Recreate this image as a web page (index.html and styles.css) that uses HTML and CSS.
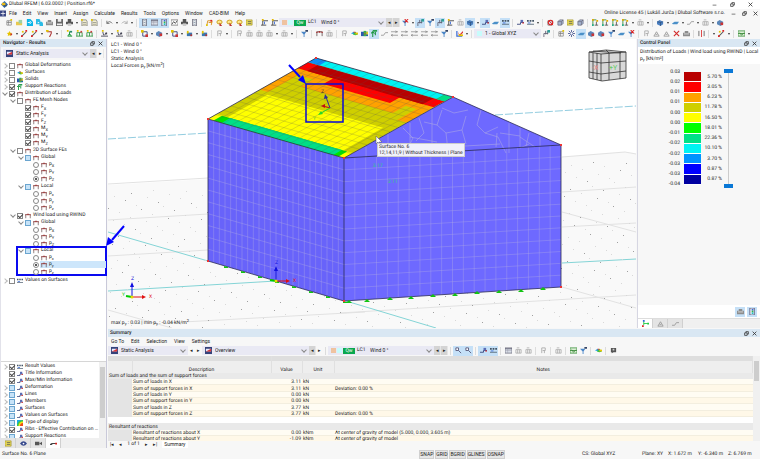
FILE: index.html
```
<!DOCTYPE html>
<html lang="en">
<head>
    <meta charset="UTF-8">
    <meta name="viewport" content="width=device-width, initial-scale=1.0">
    <title>Dlubal RFEM | 6.03.0002 | Position.rf6*</title>
    <link rel="stylesheet" href="styles.css">
</head>
<body>

<svg class="sprite" aria-hidden="true">
    <symbol id="new" viewBox="0 0 8 8"><path d="M1 2h5v5H1zM1 4h5M3 2v5" fill="#fff" stroke="#777" stroke-width=".8"/><path d="M5 0h2v2H5z" fill="#e2c400"/></symbol>
    <symbol id="open" viewBox="0 0 8 8"><path d="M0 3h3l1 1h3v3H0z" fill="#e9c94f"/><path d="M3 1h4v4H3z" fill="#9ed0a6"/></symbol>
    <symbol id="cloud" viewBox="0 0 8 8"><path d="M1 0h4l3 3v5H1z" fill="#08b4e8"/><path d="M2 4h3M4 2l2 2-2 2" stroke="#fff" fill="none"/></symbol>
    <symbol id="clouds" viewBox="0 0 8 8"><path d="M0 0h4l1 2v4H0zM4 3h3l1 2v3H4z" fill="#2bbbe6"/><path d="M2 3l2 1-2 1" fill="#fff"/></symbol>
    <symbol id="box" viewBox="0 0 8 8"><path d="M0 3h8v4H0zM2 1h4v2H2z" fill="#8d8d8d"/><path d="M1 4h6v1H1z" fill="#ddd"/></symbol>
    <symbol id="save" viewBox="0 0 8 8"><path d="M0 0h8v8H0z" fill="#666"/><path d="M2 0h4v3H2zM1 5h6v2H1z" fill="#eee"/></symbol>
    <symbol id="print" viewBox="0 0 8 8"><path d="M0 3h8v3H0zM2 0h4v3H2z" fill="#555"/><path d="M2 5h4v3H2z" fill="#ccc"/></symbol>
    <symbol id="page" viewBox="0 0 8 8"><path d="M1 1h5l1 2v5H1z" fill="#f3efcf" stroke="#777" stroke-width=".8"/><path d="M2 4h4M2 6h4" stroke="#777" stroke-width=".7"/><path d="M0 0h2v2H0z" fill="#e2c400"/></symbol>
    <symbol id="undo" viewBox="0 0 8 8"><path d="M1 2v3h3M1 5q3-4 6 0" fill="none" stroke="#666"/></symbol>
    <symbol id="redo" viewBox="0 0 8 8"><path d="M7 2v3H4M7 5q-3-4-6 0" fill="none" stroke="#aaa"/></symbol>
    <symbol id="panel" viewBox="0 0 8 8"><path d="M2 0h4v8H2z" fill="#fff" stroke="#556"/><path d="M3 2h2M3 4h2M3 6h2" stroke="#89a"/></symbol>
    <symbol id="table" viewBox="0 0 8 8"><path d="M0 1h8v6H0z" fill="#d8dde6" stroke="#667" stroke-width=".8"/><path d="M0 2h8" stroke="#667"/><path d="M0 4h8M3 2v5" stroke="#99a" stroke-width=".5"/></symbol>
    <symbol id="scale" viewBox="0 0 8 8"><path d="M1 0h5v8H1z" fill="#fff" stroke="#557"/><path d="M3 1h2v2H3z" fill="#3a6cd8"/><path d="M3 3h2v2H3z" fill="#35b54a"/><path d="M3 5h2v2H3z" fill="#2bc"/></symbol>
    <symbol id="chart" viewBox="0 0 8 8"><path d="M0 1h8v6H0z" fill="#fff" stroke="#666" stroke-width=".8"/><path d="M1 6l2-3 2 2 2-3" stroke="#444" fill="none"/></symbol>
    <symbol id="frame" viewBox="0 0 8 8"><path d="M1 7l1-5h5l-1 5M3 4h4" fill="none" stroke="#d98a16"/><path d="M5 1h2v2H5z" fill="#d22"/><path d="M0 6h2v2H0z" fill="#e2c400"/></symbol>
    <symbol id="loop" viewBox="0 0 8 8"><ellipse cx="4" cy="3.5" rx="3" ry="2.2" fill="#ffe98a" stroke="#c79a10"/><path d="M4 4l3 4H4z" fill="#b33"/></symbol>
    <symbol id="find" viewBox="0 0 8 8"><path d="M1 1h3v3H1z" fill="#fff" stroke="#557"/><path d="M4 4l3 3" stroke="#557"/></symbol>
    <symbol id="note" viewBox="0 0 8 8"><path d="M0 1h7v6H0z" fill="#efe05a" stroke="#998a22" stroke-width=".7"/><path d="M2 3h4M2 5h4" stroke="#665" /></symbol>
    <symbol id="case" viewBox="0 0 8 8"><path d="M2 7V2h6M0 7h6" fill="none" stroke="#444"/><path d="M1 0h2v2H1z" fill="#e2b400"/><path d="M4 3v3" stroke="#3a6cd8"/></symbol>
    <symbol id="funnel" viewBox="0 0 8 8"><path d="M0 2h6L4 5v3H3V5z" fill="#4a86c8"/><path d="M5 0h3v2H5z" fill="#346"/></symbol>
    <symbol id="cut" viewBox="0 0 8 8"><path d="M0 2h6L4 5v3H3V5z" fill="#4a86c8"/><path d="M3 0l4 4M7 0L3 4" stroke="#d22" stroke-width="1.2"/></symbol>
    <symbol id="load" viewBox="0 0 8 8"><path d="M1 8V4h5M3 1v4M5 1v4" fill="none" stroke="#667"/><path d="M5 0h3v3H5z" fill="#2f9f9a"/></symbol>
    <symbol id="value" viewBox="0 0 8 8"><path d="M0 6h4V4h4" fill="none" stroke="#35427a"/><path d="M4 1h3v3H4z" fill="#5a6cb4"/><path d="M6 4h2v1H6z" fill="#d22"/></symbol>
    <symbol id="number" viewBox="0 0 8 8"><path d="M0 1h2v2H0zM3 1h2v2H3zM6 1h2v2H6z" fill="#456"/><path d="M0 6h8" stroke="#567" /><path d="M1 4h3v1H1z" fill="#3a6cd8"/></symbol>
    <symbol id="cube" viewBox="0 0 8 8"><path d="M1 3l2-2h4v4L5 7H1z" fill="#a8b8d6" stroke="#667" stroke-width=".8"/><path d="M1 3h4v4M5 3l2-2" fill="none" stroke="#667" stroke-width=".8"/></symbol>
    <symbol id="nocube" viewBox="0 0 8 8"><path d="M1 2h5v5H1z" fill="#dde" stroke="#888"/><circle cx="4" cy="4" r="2.6" fill="none" stroke="#d22" stroke-width="1.3"/><path d="M2 2l5 5" stroke="#d22"/></symbol>
    <symbol id="axis" viewBox="0 0 8 8"><path d="M1 1v6M1 1h4" stroke="#3a8c3a" fill="none"/><path d="M5 3v4M3 7h4" stroke="#555"/><path d="M0 0h2v2H0zM5 1h2v2H5z" fill="#e2a800"/><path d="M0 6h2v2H0z" fill="#2a8"/></symbol>
    <symbol id="tripod" viewBox="0 0 8 8"><path d="M2 1v5M2 4h5" stroke="#2c4" fill="none"/><path d="M1 0h2v2H1z" fill="#36d"/><path d="M6 3h2v2H6z" fill="#2c4"/><path d="M0 6h2v2H0z" fill="#d22"/></symbol>
    <symbol id="solid" viewBox="0 0 8 8"><path d="M0 3l3-2 4 2v3L4 8 0 6z" fill="#4a7fc1"/><path d="M0 3l4 1 3-1M4 4v4" stroke="#28466f" fill="none" stroke-width=".7"/></symbol>
    <symbol id="solidr" viewBox="0 0 8 8"><path d="M0 3l3-2 4 2v3L4 8 0 6z" fill="#5b87b9"/><path d="M4 4h3v3H4z" fill="#c33"/></symbol>
    <symbol id="flat" viewBox="0 0 8 8"><path d="M0 5l3-2h5L6 6H1z" fill="#4a8fc8"/></symbol>
    <symbol id="star" viewBox="0 0 8 8"><path d="M4 1l1 2 2 .3-1.500 1.500.4 2L4 6l-2 .8.400-2L1 3.300 3 3z" fill="#e6c200"/><path d="M5 4h2v2H5z" fill="#c33"/></symbol>
    <symbol id="line" viewBox="0 0 8 8"><path d="M1 7l5-5" stroke="#555" stroke-width="1.200"/><path d="M5 0h2v2H5zM0 6h2v2H0z" fill="#d22"/><path d="M1 1h2v2H1z" fill="#e2c400"/></symbol>
    <symbol id="pline" viewBox="0 0 8 8"><path d="M0 6h3l2-3h3" fill="none" stroke="#999"/></symbol>
    <symbol id="member" viewBox="0 0 8 8"><path d="M1 2h5v2L4 8" stroke="#a33" stroke-width="1.200" fill="none"/><path d="M0 0h3v2H0z" fill="#e2c400"/></symbol>
    <symbol id="support" viewBox="0 0 8 8"><path d="M4 2v4M2 7h5M4 4L2 7M4 4l2 3" stroke="#1d9a3a" stroke-width="1.100" fill="none"/><path d="M1 0h2v2H1z" fill="#e2c400"/><path d="M4 1h3v2H4z" fill="#2a8a6a"/></symbol>
    <symbol id="supports" viewBox="0 0 8 8"><path d="M1 3h6M1 3v4M4 3v4M7 3v4M0 7h8" stroke="#3a9a4a" fill="none"/><path d="M1 0h2v2H1z" fill="#e2c400"/><path d="M5 1h2v2H5z" fill="#c44"/></symbol>
    <symbol id="moment" viewBox="0 0 8 8"><path d="M0 7h8M3 6L2 2M4 6l2-3" stroke="#445" fill="none"/><path d="M1 0h2v2H1z" fill="#e2c400"/><path d="M5 3h2v2H5z" fill="#445"/></symbol>
    <symbol id="balance" viewBox="0 0 8 8"><path d="M1 7l3-5 3 5zM3 5h2" stroke="#999" fill="none"/></symbol>
    <symbol id="copy" viewBox="0 0 8 8"><path d="M2 2h5v5H2z" fill="none" stroke="#35427a"/><path d="M0 0h3v3H0z" fill="#e2c400"/><path d="M5 5h3v3H5z" fill="#c33"/></symbol>
    <symbol id="block" viewBox="0 0 8 8"><path d="M1 3h6v4H1z" fill="#3c78b0"/><path d="M1 1h2v3H1z" fill="#e2c400"/><path d="M5 5h2v2H5z" fill="#b33"/></symbol>
    <symbol id="grey" viewBox="0 0 8 8"><path d="M2 1v6M2 1h4v3H3M5 4v3" stroke="#aaa" fill="none"/></symbol>
    <symbol id="greys" viewBox="0 0 8 8"><path d="M1 3h6v4H1zM3 3v4M5 3v4M2 1h3" stroke="#aaa" fill="none" stroke-width=".9"/></symbol>
    <symbol id="steps" viewBox="0 0 8 8"><path d="M0 2h8M0 6h8M5 1l2 1-2 1M2 5L0 6l2 1" stroke="#909090" fill="none" stroke-width=".9"/></symbol>
    <symbol id="frc" viewBox="0 0 8 8"><path d="M1 7V2h6v5" fill="none" stroke="#6d5a5a"/><path d="M0 2h2v1H0zM3 1h2v2H3zM6 2h2v1H6z" fill="#a33"/></symbol>
    <symbol id="rainbow" viewBox="0 0 8 8"><path d="M0 4l3-2 2 1v2z" fill="#1ca0e6"/><path d="M2 5l3-3 3 3-3 1z" fill="#3fbf3f"/><path d="M3 2h2v1H3z" fill="#e22"/><path d="M5 3h3v2H5z" fill="#ebc400"/></symbol>
    <symbol id="rsolid" viewBox="0 0 8 8"><path d="M0 2h8v5H0z" fill="#2b59b3"/><path d="M3 1h3v6H3z" fill="#39b24b"/><path d="M6 2h2v3H6z" fill="#e0d020"/><path d="M4 3h1v2H4z" fill="#d43"/></symbol>
    <symbol id="react" viewBox="0 0 8 8"><path d="M2 8V2M5 2v4M0 4l2-2 2 2" fill="none" stroke="#1a9440" stroke-width="1.200"/><path d="M2 0h5v2H2z" fill="#2aa050"/></symbol>
    <symbol id="color" viewBox="0 0 8 8"><path d="M1 1v6h6" fill="none" stroke="#3a6cd8" stroke-width="1.400"/><path d="M2 2l2 3 4-4v2L4 7z" fill="#d33"/><path d="M3 5h5v2H3z" fill="#e5c300"/></symbol>
    <symbol id="gear" viewBox="0 0 8 8"><path d="M4 0v8M0 4h8M1 1l6 6M7 1L1 7" stroke="#4b5a94"/><circle cx="4" cy="4" r="1.300" fill="#fff"/></symbol>
    <symbol id="x" viewBox="0 0 8 8"><path d="M1 1l6 6M7 1L1 7" stroke="#d22b2b" stroke-width="1.300"/></symbol>
    <symbol id="bars" viewBox="0 0 8 8"><path d="M1 1v6M7 1v6" stroke="#666"/><path d="M4 0v8" stroke="#d33"/></symbol>
    <symbol id="excel" viewBox="0 0 8 8"><path d="M0 1h8v6H0z" fill="#dff0d8" stroke="#4c9a4c"/><path d="M2 3l2 3 3-3M0 4h8" stroke="#3d8a3d" fill="none"/></symbol>
    <symbol id="heat" viewBox="0 0 8 8"><path d="M0 0h8v8H0z" fill="#17a7e8"/><path d="M0 8a8 8 0 0 1 8-8v8z" fill="#3ecb3e"/><path d="M2 8a6 6 0 0 1 6-6v6z" fill="#f3e31c"/><path d="M4 8a4 4 0 0 1 4-4v4z" fill="#ef4a1b"/></symbol>
    <symbol id="eye" viewBox="0 0 8 8"><path d="M0 4q4-5 8 0-4 5-8 0z" fill="#35488c"/><circle cx="4" cy="4" r="1" fill="#fff"/></symbol>
    <symbol id="bubble" viewBox="0 0 8 8"><path d="M1 1h6v5H4L2 7V6H1z" fill="#555"/><path d="M3 2h2v2H3z" fill="#ccc"/></symbol>
    <symbol id="camera" viewBox="0 0 8 8"><path d="M0 2h5v4H0zM5 4l3-2v4z" fill="#555"/></symbol>
    <symbol id="beam" viewBox="0 0 8 8"><path d="M0 5h2V4h6" fill="none" stroke="#444" stroke-width="1.200"/><path d="M6 3h2v2H6z" fill="#d22"/></symbol>
    <symbol id="float" viewBox="0 0 8 8"><path d="M1 3h4v4H1zM3 3V1h4v4H5" fill="none" stroke="#333" stroke-width="1.200"/></symbol>
    <symbol id="close" viewBox="0 0 8 8"><path d="M1 1l6 6M7 1L1 7" stroke="#333" stroke-width="1.300"/></symbol>
    <symbol id="min" viewBox="0 0 8 8"><path d="M1 5h6" stroke="#333"/></symbol>
    <symbol id="app" viewBox="0 0 8 8"><path d="M0 4l4-4 4 4-4 4z" fill="#2d69b3"/><path d="M1 2h4v3H1z" fill="#e8b818"/><path d="M3 5h4v1H3z" fill="#444"/></symbol>
    <symbol id="appbar" viewBox="0 0 8 8"><path d="M0 0h8v8H0z" fill="#3a4684"/><path d="M1 4h6M4 1v6" stroke="#fff"/></symbol>
    <symbol id="static" viewBox="0 0 8 8"><path d="M0 0h8v8H0z" fill="#35427a"/><path d="M1 2h6v3H1z" fill="#e9ecff"/><path d="M1 5l6-3v3z" fill="#d33"/></symbol>
</svg>

<header>
    <div class="titlebar">
        <svg class="icon"><use href="#app"/></svg>
        <span class="grow">Dlubal RFEM | 6.03.0002 | Position.rf6*</span>
        <button class="win" aria-label="Minimize"><svg class="mini"><use href="#min"/></svg></button>
        <button class="win" aria-label="Restore"><svg class="mini"><use href="#float"/></svg></button>
        <button class="win" aria-label="Close"><svg class="mini"><use href="#close"/></svg></button>
    </div>
    <nav class="menubar">
        <svg class="icon"><use href="#appbar"/></svg>
        <button>File</button><button>Edit</button><button>View</button><button>Insert</button><button>Assign</button><button>Calculate</button><button>Results</button><button>Tools</button><button>Options</button><button>Window</button><button>CAD-BIM</button><button>Help</button>
        <span class="license">Online License 45 | Lukáš Jurča | Dlubal Software s.r.o.</span>
        <button aria-label="Minimize view"><svg class="mini"><use href="#min"/></svg></button>
        <button aria-label="Restore view"><svg class="mini"><use href="#float"/></svg></button>
        <button aria-label="Close view"><svg class="mini"><use href="#close"/></svg></button>
    </nav>
    <div class="toolbar">
        <div class="tools" data-tools="new open cloud clouds box save print v page page | undo v redo v | panel+ table+ scale+ chart print panel | frame loop loop loop note | case case"></div>
        <div class="combo loadcase">
            <i class="swatch peach"></i><i class="swatch aqua"></i><span class="badge">Qw</span><span class="lc">LC1</span>
            <select aria-label="Load case"><option>Wind 0 °</option></select>
        </div>
        <button class="step" aria-label="Previous load case">◂</button><button class="step" aria-label="Next load case">▸</button>
        <div class="tools" data-tools="cut v load+ funnel load+ case greys solid+ v value+ flat number+ | value number v | nocube cube note cube | axis axis axis axis v greys v | solid v flat v pline v greys v solidr"></div>
    </div>
    <div class="toolbar">
        <div class="tools" data-tools="star v line line v member v | support supports supports | moment v moment greys | copy v solidr v copy v block v block | grey v | grey greys greys greys v greys v | funnel | frc greys | grey rainbow rsolid react+ pline steps steps steps steps steps funnel | color v |"></div>
        <div class="combo coords">
            <i class="swatch aqua"></i>
            <select aria-label="Coordinate system"><option>1 - Global XYZ</option></select>
        </div>
        <div class="tools" data-tools="load | new gear flat+ solidr solidr funnel flat cut | grey balance balance x box | bars | v line v | excel v"></div>
    </div>
</header>

<main>
    <aside class="navigator">
        <h2 class="panel-title"><span class="grow">Navigator - Results</span><svg class="mini"><use href="#float"/></svg><svg class="mini"><use href="#close"/></svg></h2>
        <div class="combo-row">
            <div class="combo grow">
                <svg class="icon"><use href="#static"/></svg>
                <select aria-label="Analysis type"><option>Static Analysis</option></select>
            </div>
            <button class="step" aria-label="Previous analysis">◂</button><button class="step" aria-label="Next analysis">▸</button>
        </div>
        <div class="tree">
            <label class="row shut"><input type="checkbox"><svg class="icon"><use href="#frc"/></svg>Global Deformations</label>
            <label class="row shut"><input type="checkbox"><svg class="icon"><use href="#rainbow"/></svg>Surfaces</label>
            <label class="row shut"><input type="checkbox"><svg class="icon"><use href="#rsolid"/></svg>Solids</label>
            <label class="row shut"><input type="checkbox" checked><svg class="icon"><use href="#react"/></svg>Support Reactions</label>
            <label class="row open"><input type="checkbox" checked><svg class="icon"><use href="#frc"/></svg>Distribution of Loads</label>
            <div class="branch">
                <label class="row open"><input type="checkbox"><svg class="icon"><use href="#frc"/></svg>FE Mesh Nodes</label>
                <div class="branch leaves">
                    <label class="row"><input type="checkbox" checked><svg class="icon"><use href="#frc"/></svg>F<sub>X</sub></label>
                    <label class="row"><input type="checkbox" checked><svg class="icon"><use href="#frc"/></svg>F<sub>Y</sub></label>
                    <label class="row"><input type="checkbox" checked><svg class="icon"><use href="#frc"/></svg>F<sub>Z</sub></label>
                    <label class="row"><input type="checkbox" checked><svg class="icon"><use href="#frc"/></svg>M<sub>X</sub></label>
                    <label class="row"><input type="checkbox" checked><svg class="icon"><use href="#frc"/></svg>M<sub>Y</sub></label>
                    <label class="row"><input type="checkbox" checked><svg class="icon"><use href="#frc"/></svg>M<sub>Z</sub></label>
                </div>
                <label class="row open"><input type="checkbox"><svg class="icon"><use href="#frc"/></svg>2D Surface FEs</label>
                <div class="branch">
                    <label class="row open"><input type="checkbox" class="part"><svg class="icon"><use href="#frc"/></svg>Global</label>
                    <div class="branch leaves">
                        <label class="row"><input type="radio" name="fe"><svg class="icon"><use href="#frc"/></svg>p<sub>X</sub></label>
                        <label class="row"><input type="radio" name="fe"><svg class="icon"><use href="#frc"/></svg>p<sub>Y</sub></label>
                        <label class="row"><input type="radio" name="fe" checked><svg class="icon"><use href="#frc"/></svg>p<sub>Z</sub></label>
                    </div>
                    <label class="row open"><input type="checkbox" class="part"><svg class="icon"><use href="#frc"/></svg>Local</label>
                    <div class="branch leaves">
                        <label class="row"><input type="radio" name="fe"><svg class="icon"><use href="#frc"/></svg>p<sub>x</sub></label>
                        <label class="row"><input type="radio" name="fe"><svg class="icon"><use href="#frc"/></svg>p<sub>y</sub></label>
                        <label class="row"><input type="radio" name="fe"><svg class="icon"><use href="#frc"/></svg>p<sub>z</sub></label>
                    </div>
                </div>
                <label class="row open"><input type="checkbox" checked><svg class="icon"><use href="#frc"/></svg>Wind load using RWIND</label>
                <div class="branch">
                    <label class="row open"><input type="checkbox" class="part"><svg class="icon"><use href="#frc"/></svg>Global</label>
                    <div class="branch">
                        <label class="row"><input type="radio" name="wind"><svg class="icon"><use href="#frc"/></svg>p<sub>X</sub></label>
                        <label class="row"><input type="radio" name="wind"><svg class="icon"><use href="#frc"/></svg>p<sub>Y</sub></label>
                        <label class="row"><input type="radio" name="wind"><svg class="icon"><use href="#frc"/></svg>p<sub>Z</sub></label>
                    </div>
                    <div class="marked">
                        <label class="row open"><input type="checkbox" class="part"><svg class="icon"><use href="#frc"/></svg>Local</label>
                        <div class="branch">
                            <label class="row"><input type="radio" name="wind"><svg class="icon"><use href="#frc"/></svg>p<sub>x</sub></label>
                            <label class="row selected"><input type="radio" name="wind" checked><svg class="icon"><use href="#frc"/></svg>p<sub>y</sub></label>
                            <label class="row"><input type="radio" name="wind"><svg class="icon"><use href="#frc"/></svg>p<sub>z</sub></label>
                        </div>
                        <svg class="mark-arrow" viewBox="0 0 20 22"><path d="M18 1L6 15" stroke="#00f" stroke-width="2"/><path d="M0 21l2-9 6 5z" fill="#00f"/></svg>
                    </div>
                </div>
            </div>
            <label class="row shut"><input type="checkbox"><svg class="icon"><use href="#number"/></svg>Values on Surfaces</label>
        </div>
        <div class="display">
            <div class="display-list">
                <label class="row shut"><input type="checkbox" checked><svg class="icon"><use href="#number"/></svg>Result Values</label>
                <label class="row"><input type="checkbox" checked><svg class="icon"><use href="#value"/></svg>Title Information</label>
                <label class="row"><input type="checkbox" checked><svg class="icon"><use href="#value"/></svg>Max/Min Information</label>
                <label class="row shut"><input type="checkbox" class="part"><svg class="icon"><use href="#value"/></svg>Deformation</label>
                <label class="row shut"><input type="checkbox" class="part"><svg class="icon"><use href="#value"/></svg>Lines</label>
                <label class="row shut"><input type="checkbox" class="part"><svg class="icon"><use href="#value"/></svg>Members</label>
                <label class="row shut"><input type="checkbox" class="part"><svg class="icon"><use href="#value"/></svg>Surfaces</label>
                <label class="row shut"><input type="checkbox" class="part"><svg class="icon"><use href="#value"/></svg>Values on Surfaces</label>
                <label class="row shut"><input type="checkbox" class="part"><svg class="icon"><use href="#heat"/></svg>Type of display</label>
                <label class="row shut"><input type="checkbox" checked><svg class="icon"><use href="#value"/></svg><span class="long">Ribs - Effective Contribution on Surfaces</span></label>
                <label class="row shut"><input type="checkbox" class="part"><svg class="icon"><use href="#value"/></svg>Support Reactions</label>
            </div>
            <div class="scrollbar"><i class="thumb"></i></div>
        </div>
        <div class="nav-tabs">
            <button aria-label="Data"><svg class="icon"><use href="#note"/></svg></button><button aria-label="Display"><svg class="icon"><use href="#eye"/></svg></button><button aria-label="Views"><svg class="icon"><use href="#camera"/></svg></button><button class="active" aria-label="Results"><svg class="icon"><use href="#beam"/></svg></button>
        </div>
    </aside>

    <section class="view">
        <svg class="scene" viewBox="108 39 528 289" preserveAspectRatio="xMidYMid slice">
            <g id="ground">
                <path d="M108 185l100-6v82l136 40 217-14V157l64-5 11 1v176H108z" fill="#f9f9f9"/>
                <path class="gridline" d="M108 184l100-6M108 220l100-6M108 256l100-6M108 310l64 18M165 323l200-11M340 313l296-18M562 157l63-5 11 2M562 192l74-5M562 227l74-4M562 212l74 20M562 287l74 21"/>
                <path class="axisline dashed" d="M108 139l100-6M495 115l141-9"/>
                <path class="axisline" d="M108 232l100 29M108 291l168-10M562 263l74-4M346 301l90 27"/>
            </g>
            <path d="M208 119l136 39v143l-136-40z" fill="#6863fa"/>
            <path d="M344 158l109-61 108 48v142l-217 14z" fill="#6e69ff"/>
            <g id="mesh-left" class="mesh" transform="matrix(136 39 0 142 208 119)"></g>
            <g id="mesh-right" class="mesh" transform="matrix(217 -13 0 142 344 158)"></g>
            <path class="gable-mesh" d="M366 147v10M388 134v21M410 123v31M432 110v42M442 108l12 5 14-3M442 110l-5 15 9 8 16-3 4-14M481 110l-4 15 8 8 13-6M485 133l13 4 8 16M462 130l4 14M497 133l-1 14M500 133l20 3M509 123v30M520 128v20l9-4M529 133l-3 13M446 133l2 18M410 137l27 5M403 128l10 10-7 14M419 118l5 15-8 8M437 125l-13-3M520 137l15 10M540 137v9M380 149l40-2M430 148l70-4"/>
            <g transform="matrix(136 39 108 -61 208 119)">
                <path d="M0 0h1v1H0z" fill="#cfcf00"/>
                <path d="M.08 .08h.85v.37H.08zM0 0h1v.08H0z" fill="#ff0"/>
                <path d="M.04 0h.92v.08H.04z" fill="#00e400"/>
                <path d="M.1 0h.82v.08H.1z" fill="#00df86"/>
                <path d="M0 .48h.06v.3H0zM0 .76h1v.07H0zM.17 .64h.68v.13H.17zM.93 .58h.07v.2h-.07z" fill="#ffa200"/>
                <path d="M.26 .74h.49v.09H.26zM0 .83h1v.1H0z" fill="#f00"/>
                <path d="M.07 .83h.85v.1H.07z" fill="#b80000"/>
                <path d="M0 .93h1v.07H0z" fill="#00f3f3"/>
                <path d="M0 .93h.08v.07H0z" fill="#0f8df5"/>
                <path d="M.94 .93h.06v.07h-.06z" fill="#00df86"/>
            </g>
            <g id="mesh-roof" class="mesh dark" transform="matrix(136 39 108 -61 208 119)"></g>
            <path class="edge" d="M208 119l136 39v143l-136-40zM208 119l108-61 137 39-109 61M453 97l108 48v142l-217 14M344 158l217-13"/>
            <g id="supports-row" fill="#12c412"></g>
            <path d="M207 118h2v2h-2zM315 57h2v2h-2zM452 96h2v2h-2zM343 157h2v2h-2zM560 144h2v2h-2zM560 286h2v2h-2zM343 300h2v2h-2zM207 260h2v2h-2z" fill="#e33"/>
            <g class="axis-cross" transform="translate(132 297)"><path d="M0 0v-13" stroke="#1010e0"/><path d="M-2-10l2-5 2 5z" fill="#1010e0"/><path d="M0 0h11" stroke="#e01010"/><path d="M10-2l4 2-4 2z" fill="#e01010"/><path d="M0 0l-6-1" stroke="#0c0" stroke-width="2"/><circle r="1.500" fill="#e8d800"/><text x="-1" y="-17" fill="#1010e0">Z</text><text x="17" y="1" fill="#e01010">X</text><text x="-10" y="-1" fill="#0c0">Y</text></g>
            <g class="axis-cross" transform="translate(276 281)"><path d="M0 0v-13" stroke="#1010e0"/><path d="M-2-10l2-5 2 5z" fill="#1010e0"/><path d="M0 0h11" stroke="#e01010"/><path d="M10-2l4 2-4 2z" fill="#e01010"/><path d="M0 0l-6-1" stroke="#0c0" stroke-width="2"/><circle r="1.500" fill="#e8d800"/><text x="-1" y="-17" fill="#1010e0">Z</text><text x="17" y="1" fill="#e01010">X</text></g>
            <g class="axis-cross" transform="translate(330 108)"><path d="M0 0l-4-11" stroke="#2a2a9a"/><path d="M-6-9l1-5 3 4z" fill="#2a2a9a"/><path d="M0 0l-7-2" stroke="#c41010"/><path d="M-9-2l4-2v4z" fill="#c41010"/><path d="M0 0l-9 5" stroke="#28d828"/><path d="M-12 7l3-4 2 3z" fill="#28d828"/><text x="-9" y="-15" fill="#333">Z</text><text x="-17" y="12" fill="#7c2">Y</text></g>
            <g class="axis-cross"><text x="373" y="167" fill="#28d088">3.17</text><text x="388" y="183" fill="#28d088">3.11</text></g>
            <path d="M289 65l11 12" stroke="#00f" stroke-width="2"/><path d="M306 84l-8-4 5-5z" fill="#00f"/>
            <path d="M306 84h37v38h-37z" fill="none" stroke="#0a0ad8" stroke-width="1.500"/>
            <g class="nav-cube" transform="translate(589 50)">
                <path d="M0 2l17-2 20 2v26l-24 3-13-3z"/>
                <path d="M0 2l12 2 25-2M12 4v27M17 0l3 3v27M31 2v27M4 1l28 2M4 3v26M8 3v27M0 11l12 2 25-2M0 22l12 2 25-3"/>
                <text x="20" y="20" fill="#6c6">+Y</text><text x="3" y="20" fill="#e88">-X</text>
            </g>
            <path d="M376 136v8l2-2 1 3 1-1-1-2h3z" fill="#fff" stroke="#555" stroke-width=".5"/>
        </svg>
        <p class="view-title">LC1 - Wind 0 °<br>LC1 - Wind 0 °<br>Static Analysis<br>Local Forces p<sub>y</sub> [kN/m<sup>2</sup>]</p>
        <p class="view-range">max p<sub>y</sub> : 0.03 | min p<sub>y</sub> : -0.04 kN/m<sup>2</sup></p>
        <div class="tooltip" role="tooltip">Surface No. 6<br>12,14,11,9 | Without Thickness | Plane</div>
    </section>

    <aside class="control">
        <h2 class="panel-title"><span class="grow">Control Panel</span><svg class="mini"><use href="#float"/></svg><svg class="mini"><use href="#close"/></svg></h2>
        <p class="control-info">Distribution of Loads | Wind load using RWIND | Local<br>p<sub>y</sub> [kN/m²]</p>
        <div class="legend">
            <ul class="limits"><li>0.03</li><li>0.02</li><li>0.01</li><li>0.01</li><li>0.00</li><li>0.00</li><li>-0.01</li><li>-0.02</li><li>-0.02</li><li>-0.03</li><li>-0.03</li><li>-0.04</li></ul>
            <ul class="colors"><li class="c1"></li><li class="c2"></li><li class="c3"></li><li class="c4"></li><li class="c5"></li><li class="c6"></li><li class="c7"></li><li class="c8"></li><li class="c9"></li><li class="c10"></li><li class="c11"></li></ul>
            <ul class="shares"><li>5.70 %</li><li>3.05 %</li><li>6.23 %</li><li>11.78 %</li><li>16.50 %</li><li>18.01 %</li><li>22.36 %</li><li>10.10 %</li><li>3.70 %</li><li>0.87 %</li><li>0.87 %</li></ul>
            <div class="range"><input type="range" min="0" max="11" value="0" aria-label="Upper limit"><input type="range" min="0" max="11" value="11" aria-label="Lower limit"></div>
        </div>
        <div class="control-tools">
            <button class="tool on" aria-label="Options"><svg class="icon"><use href="#box"/></svg></button>
            <button class="tool on" aria-label="Color scale"><svg class="icon"><use href="#scale"/></svg></button>
        </div>
        <div class="control-tabs"><button class="active" aria-label="Colors"><svg class="icon"><use href="#tripod"/></svg></button><button aria-label="Factors"><svg class="icon"><use href="#balance"/></svg></button><button aria-label="Filter"><svg class="icon"><use href="#pline"/></svg></button></div>
    </aside>

    <section class="summary">
        <h2 class="panel-title"><span class="grow">Summary</span><svg class="mini"><use href="#float"/></svg><svg class="mini"><use href="#close"/></svg></h2>
        <nav class="summary-menu"><button>Go To</button><button>Edit</button><button>Selection</button><button>View</button><button>Settings</button></nav>
        <div class="toolbar">
            <div class="combo analysis"><svg class="icon"><use href="#static"/></svg><select aria-label="Analysis"><option>Static Analysis</option></select></div>
            <button class="step plain" aria-label="Previous">◂</button><button class="step plain" aria-label="Next">▸</button>
            <div class="combo overview"><svg class="icon"><use href="#static"/></svg><select aria-label="Table"><option>Overview</option></select></div>
            <button class="step" aria-label="Previous table">◂</button><button class="step plain" aria-label="Next table">▸</button>
            <div class="tools" data-tools="|"></div>
            <div class="combo case">
                <i class="swatch peach"></i><i class="swatch aqua"></i><span class="badge">Qw</span><span class="lc">LC1</span>
                <select aria-label="Load case of table"><option>Wind 0 °</option></select>
            </div>
            <button class="step" aria-label="Previous case">◂</button><button class="step" aria-label="Next case">▸</button>
            <div class="tools" data-tools="| find+ find+ | value+ number+ | table greys greys | grey | greys | excel funnel | rainbow | bubble"></div>
        </div>
        <div class="table-wrap">
            <table>
                <colgroup><col class="col-no"><col class="col-desc"><col class="col-value"><col class="col-unit"><col></colgroup>
                <thead>
                    <tr class="strip"><th></th><th></th><th></th><th></th><th></th></tr>
                    <tr><th></th><th>Description</th><th>Value</th><th>Unit</th><th>Notes</th></tr>
                </thead>
                <tbody>
                    <tr class="group"><td colspan="5">Sum of loads and the sum of support forces</td></tr>
                    <tr><td></td><td>Sum of loads in X</td><td>3.11</td><td>kN</td><td></td></tr>
                    <tr><td></td><td>Sum of support forces in X</td><td>3.11</td><td>kN</td><td>Deviation: 0.00 %</td></tr>
                    <tr><td></td><td>Sum of loads in Y</td><td>0.00</td><td>kN</td><td></td></tr>
                    <tr><td></td><td>Sum of support forces in Y</td><td>0.00</td><td>kN</td><td></td></tr>
                    <tr><td></td><td>Sum of loads in Z</td><td>3.77</td><td>kN</td><td></td></tr>
                    <tr><td></td><td>Sum of support forces in Z</td><td>3.77</td><td>kN</td><td>Deviation: 0.00 %</td></tr>
                    <tr class="blank"><td colspan="5"></td></tr>
                    <tr class="group"><td colspan="5">Resultant of reactions</td></tr>
                    <tr><td></td><td>Resultant of reactions about X</td><td>0.00</td><td>kNm</td><td>At center of gravity of model (5.000, 0.000, 3.605 m)</td></tr>
                    <tr><td></td><td>Resultant of reactions about Y</td><td>-1.09</td><td>kNm</td><td>At center of gravity of model</td></tr>
                </tbody>
            </table>
            <div class="scrollbar"><i class="thumb short"></i></div>
        </div>
        <div class="pager"><button aria-label="First">|◂</button><button aria-label="Back">◂</button><span>1 of 1</span><button aria-label="Forward">▸</button><button aria-label="Last">▸|</button><button class="active">Summary</button></div>
    </section>
</main>

<footer>
    <span class="grow">Surface No. 6 Plane</span>
    <div class="snaps"><button>SNAP</button><button>GRID</button><button>BGRID</button><button>GLINES</button><button>OSNAP</button></div>
    <span class="cs">CS: Global XYZ</span>
    <span class="plane">Plane: XY</span>
    <span class="coord">X: 1.672 m</span>
    <span class="coord">Y: -6.340 m</span>
    <span class="coord">Z: 6.769 m</span>
</footer>

<script src="script.js"></script>
</body>
</html>
```

FILE: styles.css
```
* {
    box-sizing: border-box;
}

body {
    margin: 0;
    height: 100vh;
    display: flex;
    flex-direction: column;
    overflow: hidden;
    background: #f7f7f7;
    color: #222;
    font: 5px/7px Roboto, "Liberation Sans", sans-serif;
    text-rendering: geometricPrecision;
}

button, select {
    font: inherit;
    color: inherit;
    border: none;
    background: none;
    padding: 0;
}

p, h2, ul {
    margin: 0;
    padding: 0;
    list-style: none;
}

sub, sup {
    font-size: 4px;
    line-height: 0;
}

sub {
    vertical-align: -1px;
}

sup {
    vertical-align: 2px;
}

.sprite {
    display: none;
}

.grow {
    flex: 1;
}

.icon {
    width: 7px;
    height: 7px;
    flex: none;
}

.mini {
    width: 5px;
    height: 5px;
    flex: none;
}

/* title, menu, toolbars */
.titlebar {
    display: flex;
    align-items: center;
    height: 9px;
    padding: 0 1px;
    gap: 1px;
    background: #fff;
}

.win {
    width: 17px;
    display: flex;
    justify-content: center;
}

.menubar {
    display: flex;
    align-items: center;
    height: 8px;
    gap: 6px;
    padding-right: 2px;
}

.menubar .icon {
    width: 6px;
    margin-right: -3px;
}

.menubar .mini {
    display: block;
}

.menubar .license {
    margin-left: auto;
}

.toolbar {
    display: flex;
    align-items: center;
    height: 11px;
}

header .toolbar {
    padding-left: 4px;
}

.tools {
    display: flex;
    align-items: center;
}

.tool {
    width: 10px;
    height: 10px;
    display: flex;
    align-items: center;
    justify-content: center;
}

.tool.on {
    background: #c5e0f7;
}

.drop {
    width: 5px;
    height: 10px;
    display: flex;
    align-items: center;
    justify-content: center;
}

.drop::before {
    content: "";
    border: 1px solid transparent;
    border-top: 2px solid #333;
    border-bottom: 0;
}

.sep {
    width: 1px;
    height: 8px;
    margin: 0 2px;
    background: #dcdcdc;
}

.combo {
    display: flex;
    align-items: center;
    gap: 1px;
    height: 9px;
    padding: 0 3px;
    background: #e9e9f4;
    position: relative;
}

.combo select {
    flex: 1;
    min-width: 0;
    appearance: none;
    height: 9px;
    margin-left: 2px;
}

.combo::after {
    content: "";
    width: 3px;
    height: 3px;
    margin-bottom: 2px;
    border: solid #888;
    border-width: 0 1px 1px 0;
    transform: rotate(45deg);
}

.loadcase {
    width: 107px;
}

.coords {
    width: 67px;
}

.analysis {
    width: 80px;
}

.overview {
    width: 107px;
}

.case {
    width: 106px;
}

.swatch {
    width: 5px;
    height: 5px;
    flex: none;
}

.peach {
    background: #efc3a0;
}

.aqua {
    background: #c8fcfc;
}

.badge {
    width: 12px;
    height: 6px;
    line-height: 6px;
    background: #0aa84f;
    color: #fff;
    text-align: center;
}

.lc {
    width: 11px;
    padding-left: 1px;
}

.step {
    width: 7px;
    height: 9px;
    background: #d4d4d4;
    text-align: center;
    border-right: 1px solid #e6e6e6;
}

.step.plain {
    background: none;
    border: none;
}

/* main areas */
main {
    flex: 1;
    min-height: 0;
    display: grid;
    grid-template-columns: 107px 1fr 123px;
    grid-template-rows: 1fr 119px;
    gap: 1px;
    padding-bottom: 1px;
}

.panel-title {
    display: flex;
    align-items: center;
    gap: 3px;
    height: 8px;
    padding: 0 3px 0 2px;
    font-size: 5px;
    font-weight: 500;
    background: #d9e7f3;
}

.navigator {
    grid-row: span 2;
    display: flex;
    flex-direction: column;
    min-height: 0;
    border-right: 1px solid #c9c9d9;
    border-left: 1px solid #e2e2ea;
    background: #fff;
}

.combo-row {
    display: flex;
    align-items: center;
    height: 13px;
    padding: 0 2px;
    background: #f7f7f7;
}

.combo-row .step + .step {
    background: none;
}

.tree {
    flex: 1;
    padding-top: 2px;
}

.branch {
    padding-left: 8px;
}

.leaves {
    margin-bottom: 1px;
}

.row {
    display: flex;
    align-items: center;
    height: 7px;
    padding-left: 8px;
    position: relative;
    white-space: nowrap;
}

.row .icon {
    width: 6px;
    height: 6px;
    margin: 0 2px;
}

.row .long {
    min-width: 0;
    overflow: hidden;
    text-overflow: ellipsis;
}

.row sub {
    padding-top: 2px;
}

.row input {
    appearance: none;
    width: 6px;
    height: 6px;
    margin: 0;
    flex: none;
    border: 1px solid #888;
    background: #fff;
    display: flex;
    align-items: center;
    justify-content: center;
}

.row input[type="checkbox"]:checked::before {
    content: "";
    width: 2px;
    height: 4px;
    border: solid #444;
    border-width: 0 1px 1px 0;
    transform: rotate(45deg);
}

.row input.part {
    background: #c7e3f8;
    border-color: #6ba5cf;
}

.row input[type="radio"] {
    border-radius: 50%;
}

.row input[type="radio"]:checked::before {
    content: "";
    width: 2px;
    height: 2px;
    border-radius: 50%;
    background: #222;
}

.shut::before, .open::before {
    content: "";
    position: absolute;
    left: 2px;
    width: 3px;
    height: 3px;
    border: solid #bbb;
    border-width: 1px 1px 0 0;
    transform: rotate(45deg);
}

.open::before {
    margin-top: -2px;
    border-color: #888;
    transform: rotate(135deg);
}

.selected {
    background: linear-gradient(90deg, transparent 15px, #cde6fb 15px);
}

.marked {
    position: relative;
    margin-bottom: 2px;
    outline: 2px solid #0a0af0;
    outline-offset: -1px;
}

.mark-arrow {
    position: absolute;
    left: 100%;
    top: -22px;
    width: 20px;
    height: 22px;
    z-index: 2;
}

.display {
    display: flex;
    height: 77px;
    border-top: 1px solid #d6d6d6;
}

.display-list {
    flex: 1;
    min-width: 0;
    padding-top: 1px;
    overflow: hidden;
}

.scrollbar {
    width: 7px;
    flex: none;
    padding: 5px 1px;
    background: #f0f0f0;
}

.thumb {
    display: block;
    height: 51px;
    background: #cdcdcd;
}

.thumb.short {
    height: 20px;
}

.nav-tabs, .control-tabs {
    display: flex;
    background: #f0f0f0;
    height: 10px;
}

.nav-tabs button, .control-tabs button {
    width: 15px;
    display: flex;
    align-items: center;
    justify-content: center;
    background: #e4e4e4;
    border-right: 1px solid #d0d0d0;
}

.nav-tabs .active, .control-tabs .active {
    background: #fff;
}

/* model view */
.view {
    position: relative;
    overflow: hidden;
    background: #fff;
}

.scene {
    display: block;
    width: 100%;
    height: 100%;
}

.gridline {
    stroke: #e2e2e2;
    fill: none;
}

.axisline {
    stroke: #84d4d6;
    fill: none;
}

.dashed {
    stroke: #93cde0;
    stroke-dasharray: 8 2;
}

.mesh {
    stroke: #a9a5e6;
    stroke-opacity: .8;
    stroke-width: .5;
}

.mesh line {
    vector-effect: non-scaling-stroke;
}

.mesh.dark {
    stroke: #555;
    stroke-opacity: .4;
}

.gable-mesh {
    fill: none;
    stroke: #a9a5e6;
    stroke-width: .6;
}

.edge {
    fill: none;
    stroke: #2b2b55;
    stroke-width: .8;
}

.axis-cross text {
    font-size: 5px;
}

.nav-cube path {
    fill: #d8d8d8;
    stroke: #333;
    stroke-width: .8;
}

.nav-cube path + path {
    fill: none;
}

.nav-cube text {
    font-size: 7px;
}

.view-title, .view-range {
    position: absolute;
    left: 3px;
    top: 3px;
}

.view-range {
    top: auto;
    bottom: 1px;
}

.tooltip {
    position: absolute;
    left: 269px;
    top: 104px;
    padding: 0 1px;
    line-height: 6px;
    background: #f1f1fb;
    border: 1px solid #ccc;
    white-space: nowrap;
}

/* control panel */
.control {
    display: flex;
    flex-direction: column;
    border-left: 1px solid #d6d6e2;
}

.control-info {
    height: 17px;
    padding: 2px;
    background: #fff;
    white-space: nowrap;
}

.legend {
    flex: 1;
    display: flex;
    align-items: flex-start;
    padding-top: 8px;
}

.legend ul {
    display: flex;
    flex-direction: column;
    height: 113px;
}

.legend li {
    flex: 1;
    display: flex;
    align-items: center;
    justify-content: flex-end;
    white-space: nowrap;
}

.legend .limits {
    width: 42px;
    height: 123px;
    margin-top: -5px;
}

.colors {
    width: 17px;
    margin: 0 4px;
}

.colors li {
    border-bottom: 1px solid #fff;
}

.shares {
    width: 17px;
}

.range {
    display: grid;
    height: 119px;
    margin: -3px 0 0 2px;
}

.range input {
    grid-area: 1 / 1;
    writing-mode: vertical-lr;
    appearance: none;
    width: 9px;
    height: 119px;
    margin: 0;
    pointer-events: none;
    background: linear-gradient(90deg, transparent 4px, #ccc 4px, #ccc 5px, transparent 5px);
}

.range input + input {
    background: none;
}

.range input::-webkit-slider-thumb {
    appearance: none;
    width: 9px;
    height: 4px;
    background: #0a78d6;
    pointer-events: auto;
}

.c1 { background: #b80000; }
.c2 { background: #f00; }
.c3 { background: #ffa200; }
.c4 { background: #cfcf00; }
.c5 { background: #ff0; }
.c6 { background: #0f0; }
.c7 { background: #00e187; }
.c8 { background: #00f3f3; }
.c9 { background: #0093ff; }
.c10 { background: #00f; }
.c11 { background: #0000a0; }

.control-tools {
    display: flex;
    justify-content: flex-end;
    align-items: center;
    gap: 2px;
    height: 13px;
    padding-right: 3px;
    background: #fff;
}

.control-tabs {
    border-top: 1px solid #ddd;
}

/* summary */
.summary {
    grid-column: 2 / 4;
    display: flex;
    flex-direction: column;
    min-width: 0;
    min-height: 0;
}

.summary-menu {
    display: flex;
    gap: 7px;
    height: 8px;
    padding: 1px 0 0 3px;
}

.table-wrap {
    flex: 1;
    min-height: 0;
    display: flex;
    align-items: stretch;
    overflow: hidden;
    background: #fff;
}

table {
    flex: 1;
    align-self: flex-start;
    table-layout: fixed;
    width: 100%;
    border-collapse: collapse;
    line-height: 6px;
}

.col-no { width: 24px; }
.col-desc { width: 139px; }
.col-value { width: 31px; }
.col-unit { width: 32px; }

th {
    height: 12px;
    padding: 0;
    vertical-align: bottom;
    font-weight: 400;
    background: #eee;
    border-right: 1px solid #e0e0e0;
}

.strip th {
    height: 5px;
    background: #dedede;
}

td {
    height: 6px;
    padding: 0 1px;
    background: #fffcf3;
    box-shadow: inset 0 -1px #f3eedf;
    white-space: nowrap;
}

tr:nth-child(odd) td {
    background: #fff8e8;
}

tr:nth-child(3n) td {
    height: 7px;
}

td:nth-child(3) {
    text-align: right;
}

tr td:first-child:not([colspan]) {
    background: #e4e4e4;
    box-shadow: none;
}

.group td, tr.group:nth-child(odd) td {
    background: #e9e9e9;
    box-shadow: none;
}

.blank td {
    background: #fff;
    box-shadow: none;
}

.pager {
    display: flex;
    align-items: center;
    gap: 5px;
    height: 7px;
    padding-left: 2px;
}

.pager .active {
    height: 7px;
    padding: 0 2px;
    background: #fff;
}

/* status bar */
footer {
    display: flex;
    align-items: center;
    height: 10px;
    padding: 0 2px;
}

.snaps {
    display: flex;
    gap: 1px;
    margin-right: 77px;
}

.snaps button {
    background: #e6e6e6;
    border: 1px solid #d0d0d0;
}

.cs { width: 60px; }
.plane { width: 26px; }
.coord { width: 30px; }
```

FILE: script.js
```
// toolbars: "name" is a button, "name+" a pressed one, "v" a drop-down arrow, "|" a separator
document.querySelectorAll('.tools').forEach(function (bar) {
    let html = '';
    bar.dataset.tools.split(' ').forEach(function (item) {
        if (item === '|') {
            html += '<i class="sep"></i>';
        } else if (item === 'v') {
            html += '<button class="drop" aria-label="More"></button>';
        } else {
            const name = item.replace('+', '');
            const on = item.endsWith('+') ? ' on' : '';
            html += `<button class="tool${on}" aria-label="${name}"><svg class="icon"><use href="#${name}"/></svg></button>`;
        }
    });
    bar.innerHTML = html;
});

const NS = 'http://www.w3.org/2000/svg';

function add(parent, tag, attrs) {
    const el = document.createElementNS(NS, tag);
    for (const key in attrs) {
        el.setAttribute(key, attrs[key]);
    }
    parent.appendChild(el);
}

// each face is a unit square with its own matrix
function mesh(id, cols, rows) {
    const g = document.getElementById(id);
    for (let i = 1; i < cols; i++) {
        add(g, 'line', { x1: i / cols, x2: i / cols, y1: 0, y2: 1 });
    }
    for (let i = 1; i < rows; i++) {
        add(g, 'line', { x1: 0, x2: 1, y1: i / rows, y2: i / rows });
    }
}

mesh('mesh-left', 24, 12);
mesh('mesh-right', 20, 12);
mesh('mesh-roof', 18, 14);

// grid points on the ground, only in the free areas beside the building
const ground = document.getElementById('ground');
for (let r = 0; r < 16; r++) {
    for (let c = 0; c < 50; c++) {
        const x = 104 + c * 11 + (r * 5) % 11;
        const y = 172 + r * 12 - Math.round(c * 0.6) + (c * 5) % 12;
        const inFloor = x > 563 ? y > 158 : y > 188;
        if (inFloor && y < 328) {
            add(ground, 'rect', { x: x, y: y, width: 1, height: 1, fill: (r + c) % 3 ? '#d8d8d8' : '#a0a0a0' });
        }
    }
}

const supports = document.getElementById('supports-row');
[349, 367, 390, 411, 433, 455, 477, 499, 521, 543].forEach(function (x) {
    const y = Math.round(301 - 14 * (x - 344) / 217);
    add(supports, 'path', { d: `M${x} ${y - 1}l3 3h-6z` });
});
for (let x = 224; x < 344; x += 17) {
    add(supports, 'path', { d: `M${x} ${Math.round(261 + 40 * (x - 208) / 136)}l4 1v1h-4z` });
}
```
